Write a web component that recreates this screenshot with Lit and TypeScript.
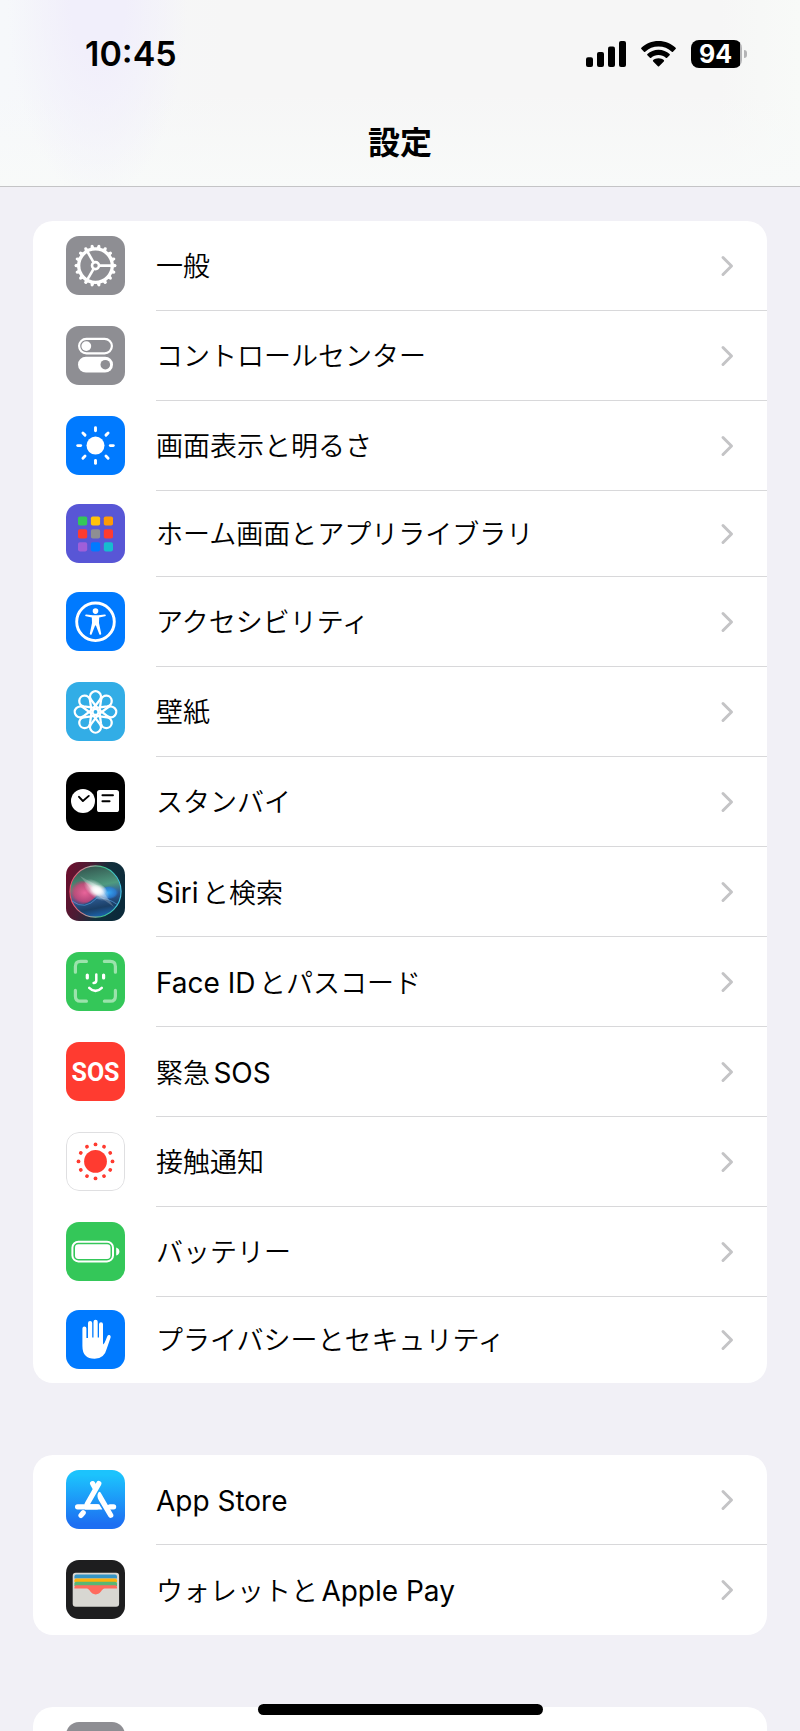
import { LitElement, html, svg, css } from "lit";
import { customElement, property } from "lit/decorators.js";

const range = (n: number) => Array.from({ length: n }, (_, i) => i);

const icons: Record<string, unknown> = {
  general: svg`
    <rect width="59" height="59" fill="#8e8e93"/>
    <g transform="translate(29.5 29.6)" fill="none" stroke="#fff">
      <circle r="16.8" stroke-width="3.3"/>
      <circle r="3.5" stroke-width="2.6"/>
      ${range(18).map((i) => svg`<path d="M17.5 -2 L20.4 -1.3 Q21.8 0 20.4 1.3 L17.5 2 Z" fill="#fff" stroke="none" transform="rotate(${i * 20})"/>`)}
      ${range(3).map((i) => svg`<path d="M4.4 0 H16" stroke-width="2.6" transform="rotate(${i * 120})"/>`)}
    </g>`,
  control: svg`
    <rect width="59" height="59" fill="#8e8e93"/>
    <rect x="13.1" y="12.8" width="32.8" height="14.6" rx="7.3" fill="none" stroke="#fff" stroke-width="2.2"/>
    <circle cx="20.3" cy="20.1" r="4.9" fill="#fff"/>
    <rect x="12" y="30.8" width="35" height="15.8" rx="7.9" fill="#fff"/>
    <circle cx="39.3" cy="38.7" r="4.8" fill="#8e8e93"/>`,
  display: svg`
    <rect width="59" height="59" fill="#007aff"/>
    <g transform="translate(29.5 29.6)">
      <circle r="9" fill="#fff"/>
      ${range(8).map((i) => svg`<path d="M0 -14.8 V-17.8" stroke="#fff" stroke-width="2.9" stroke-linecap="round" transform="rotate(${i * 45})"/>`)}
    </g>`,
  home: svg`
    <rect width="59" height="59" fill="#5856d6"/>
    ${["#34c759", "#ffc20a", "#ff9a06", "#ff3b30", "#8e8e93", "#ff3b30", "#9f5fd9", "#007aff", "#17bccf"].map(
      (c, i) => svg`<rect x="${12 + (i % 3) * 12.9}" y="${12.4 + Math.floor(i / 3) * 12.9}" width="9.2" height="9.2" rx="1.8" fill="${c}"/>`
    )}`,
  access: svg`
    <rect width="59" height="59" fill="#007aff"/>
    <circle cx="29.5" cy="29.8" r="18.8" fill="none" stroke="#fff" stroke-width="2.9"/>
    <circle cx="29.5" cy="19.1" r="2.8" fill="#fff"/>
    <path d="M20.2 22.4 L27 23.3 H32 L38.8 22.4 A0.9 0.9 0 0 1 39 24.2 L33.2 25.6 L33 31 L35.2 41.6 A1 1 0 0 1 33.3 42.2 L29.9 33.4 H29.1 L25.7 42.2 A1 1 0 0 1 23.8 41.6 L26 31 L25.8 25.6 L20 24.2 A0.9 0.9 0 0 1 20.2 22.4 Z" fill="#fff"/>`,
  wallpaper: svg`
    <rect width="59" height="59" fill="#32ade6"/>
    <g transform="translate(29.5 29.9)" fill="none" stroke="#fff" stroke-width="2.3">
      ${range(8).map((i) => svg`<path d="M2.4 -3.2 L-4.4 -12.2 A5.4 5.4 0 1 1 4.4 -12.2 L-2.4 -3.2" stroke-linejoin="round" transform="rotate(${i * 45})"/>`)}
      <circle r="3" fill="#32ade6"/>
    </g>`,
  standby: svg`
    <rect width="59" height="59" fill="#000"/>
    <circle cx="17" cy="28.9" r="12" fill="#fff"/>
    <path d="M13 24.8 L16.9 29 L22.8 23.9" fill="none" stroke="#000" stroke-width="1.9" stroke-linecap="round" stroke-linejoin="round"/>
    <rect x="31" y="18" width="22" height="22" rx="2.6" fill="#fff"/>
    <path d="M36.4 23.3 H47 M36.4 29.2 H43.6" stroke="#000" stroke-width="1.9" stroke-linecap="round"/>`,
  siri: svg`
    <defs>
      <linearGradient id="siri-bg" x1="0" y1="0.2" x2="1" y2="0.5">
        <stop offset="0" stop-color="#6b0f2d"/><stop offset="0.35" stop-color="#4a1c34"/><stop offset="0.65" stop-color="#12303c"/><stop offset="1" stop-color="#0b2a3a"/>
      </linearGradient>
      <linearGradient id="siri-ring" x1="0" y1="0.5" x2="1" y2="0.5">
        <stop offset="0" stop-color="#f2486a"/><stop offset="0.4" stop-color="#a9a9a4"/><stop offset="0.65" stop-color="#3cc48a"/><stop offset="1" stop-color="#46c6ea"/>
      </linearGradient>
      <linearGradient id="siri-orb" x1="0.4" y1="0" x2="0.6" y2="1">
        <stop offset="0" stop-color="#33564f"/><stop offset="0.4" stop-color="#4f9a80"/><stop offset="0.6" stop-color="#2f5c94"/><stop offset="0.82" stop-color="#1a3f66"/><stop offset="1" stop-color="#1a66b4"/>
      </linearGradient>
      <radialGradient id="siri-pink"><stop offset="0" stop-color="#e8649a"/><stop offset="0.75" stop-color="#cc4478" stop-opacity="0.85"/><stop offset="1" stop-color="#c03468" stop-opacity="0.3"/></radialGradient>
      <radialGradient id="siri-blue"><stop offset="0" stop-color="#35a9f5"/><stop offset="0.75" stop-color="#2a80d8" stop-opacity="0.8"/><stop offset="1" stop-color="#2a70c8" stop-opacity="0.1"/></radialGradient>
      <radialGradient id="siri-glow"><stop offset="0" stop-color="#fff"/><stop offset="0.3" stop-color="#fff" stop-opacity="0.8"/><stop offset="1" stop-color="#fff" stop-opacity="0"/></radialGradient>
    </defs>
    <rect width="59" height="59" fill="url(#siri-bg)"/>
    <circle cx="29.5" cy="29.5" r="25.6" fill="url(#siri-orb)" stroke="url(#siri-ring)" stroke-width="1.1"/>
    <path d="M4.5 30 C6 20 14 17 20 20 C26 23 30 28 33 30 C27 40 18 44 9 42 Q4.5 36 4.5 30 Z" fill="url(#siri-pink)"/>
    <path d="M32 30 C38 23 48 22 52 27 C54 34 46 40 38 36 Z" fill="url(#siri-blue)"/>
    <path d="M6 39 Q19 49 31 36 Q41 35 52 43" fill="none" stroke="#59a7e8" stroke-opacity="0.6" stroke-width="1"/>
    <path d="M14 14 L34 25 L48 45 L28 31 Z" fill="#fff" opacity="0.22"/>
    <ellipse cx="30.5" cy="28" rx="15" ry="8" fill="url(#siri-glow)" transform="rotate(38 30.5 28)"/>
    <ellipse cx="32" cy="28.5" rx="9" ry="6" fill="url(#siri-glow)"/>`,
  face: svg`
    <rect width="59" height="59" fill="#34c759"/>
    <g fill="none" stroke-linecap="round">
      <path d="M9.4 20.2 V14.4 Q9.4 9.4 14.4 9.4 H20.4 M38.4 9.4 H44.4 Q49.4 9.4 49.4 14.4 V20.2 M49.4 38.4 V44.2 Q49.4 49.2 44.4 49.2 H38.4 M20.4 49.2 H14.4 Q9.4 49.2 9.4 44.2 V38.4" stroke="#9be3ac" stroke-width="3.2"/>
      <path d="M21.3 23 V26 M37.6 23 V26" stroke="#fff" stroke-width="3.2"/>
      <path d="M30.3 22.6 V28.6 Q30.3 31 27.6 31" stroke="#fff" stroke-width="2.5"/>
      <path d="M23.2 35.8 Q29.5 42 35.8 35.8" stroke="#fff" stroke-width="2.5"/>
    </g>`,
  sos: svg`
    <rect width="59" height="59" fill="#ff3b30"/>
    <text class="sos" x="29.5" y="39" text-anchor="middle" fill="#fff">SOS</text>`,
  exposure: svg`
    <rect width="59" height="59" fill="#fff"/>
    <rect x="0.5" y="0.5" width="58" height="58" rx="12.5" fill="none" stroke="#dfdfe1"/>
    <g transform="translate(29.5 29.4)" fill="#ff3b30">
      <circle r="11.4"/>
      ${range(12).map((i) => svg`<circle cy="-17" r="1.9" transform="rotate(${i * 30})"/>`)}
    </g>`,
  battery: svg`
    <rect width="59" height="59" fill="#34c759"/>
    <rect x="6.4" y="19.8" width="40.6" height="19.6" rx="6" fill="none" stroke="#fff" stroke-width="2"/>
    <rect x="9" y="22.3" width="35.5" height="14.6" rx="3.4" fill="#fff"/>
    <path d="M50.2 25.6 Q53.4 26.6 53.4 29.6 Q53.4 32.6 50.2 33.6 Z" fill="#fff"/>`,
  privacy: svg`
    <rect width="59" height="59" fill="#007aff"/>
    <path d="M16.4 18.6 a2 2 0 0 1 4 0 V28 h1.6 V13 a2.1 2.1 0 0 1 4.2 0 V27.4 h1.3 V11.8 a2.1 2.1 0 0 1 4.2 0 V27.4 h1.3 V14.2 a2 2 0 0 1 4 0 V34.6 q1.6 -1 2.6 -4 l1.6 -4.2 q0.8 -1.8 2.4 -1.3 q1.5 0.6 1 2.4 L41 38 Q38.4 48.8 28.6 48.8 Q16.4 48.8 16.4 36 Z" fill="#fff"/>`,
  appstore: svg`
    <defs><linearGradient id="as-bg" x1="0" y1="0" x2="0" y2="1"><stop offset="0.08" stop-color="#1cc3fd"/><stop offset="0.92" stop-color="#1d6ff2"/></linearGradient></defs>
    <rect width="59" height="59" fill="url(#as-bg)"/>
    <g fill="none" stroke="#fff" stroke-width="5.2" stroke-linecap="round">
      <path d="M32.8 13.6 L21.2 34"/>
      <path d="M26.6 13.6 L28.6 17.2"/>
      <path d="M11.6 36.8 H31" />
      <path d="M44 36.8 H47.6"/>
      <path d="M17.2 42.8 L15 45.4"/>
    </g>
    <path d="M19 34.2 H33.2 L36.4 39.4 H19 Z" fill="#fff"/>
    <path d="M32.6 22.2 C30.9 24.6 31.2 27.4 32.8 30.2 L42.4 46.6 A2.6 2.6 0 0 0 47 44 L34.6 22.4 Q33.4 21.2 32.6 22.2 Z" fill="#fff"/>`,
  wallet: svg`
    <rect width="59" height="59" fill="#1e1e1f"/>
    <rect x="6.7" y="12.8" width="46.4" height="34" rx="3" fill="#d8d7d2"/>
    <path d="M8.4 18.6 V16.6 Q8.4 14.6 10.4 14.6 H49 Q51 14.6 51 16.6 V18.6 Z" fill="#3695c5"/>
    <path d="M8.4 22.3 V20.3 Q8.4 18.5 10.2 18.5 H49.2 Q51 18.5 51 20.3 V22.3 Z" fill="#ffb10a"/>
    <path d="M8.4 26 V23.6 Q8.4 21.8 10.2 21.8 H49.2 Q51 21.8 51 23.6 V26 Z" fill="#59b774"/>
    <path d="M8.4 28.6 V27 Q8.4 25.2 10.2 25.2 H49.2 Q51 25.2 51 27 V28.6 H38.6 C35.6 28.6 35 34.4 29.7 34.4 C24.4 34.4 23.8 28.6 20.8 28.6 Z" fill="#ff6b5d"/>`,
  plain: svg`<rect width="59" height="59" fill="#8e8e93"/>`,
};

interface Item {
  icon: string;
  label: string;
  name?: string;
  compact?: boolean;
}

const groups: Item[][] = [
  [
    { icon: "general", label: "一般" },
    { icon: "control", label: "コントロールセンター" },
    { icon: "display", label: "画面表示と明るさ" },
    { icon: "home", label: "ホーム画面とアプリライブラリ", compact: true },
    { icon: "access", label: "アクセシビリティ" },
    { icon: "wallpaper", label: "壁紙" },
    { icon: "standby", label: "スタンバイ" },
    { icon: "siri", label: "Siriと検索" },
    { icon: "face", label: "Face IDとパスコード" },
    { icon: "sos", label: "緊急SOS" },
    { icon: "exposure", label: "接触通知" },
    { icon: "battery", label: "バッテリー" },
    { icon: "privacy", label: "プライバシーとセキュリティ", compact: true },
  ],
  [
    { icon: "appstore", label: "App Store" },
    { icon: "wallet", label: "ウォレットとApple Pay" },
  ],
  [{ icon: "plain", label: "", name: "パスワード" }],
];

// Splits a label into runs of Latin and Japanese script.
const runs = (label: string) => label.match(/[ -~]+|[^ -~]+/g) ?? [];

@customElement("settings-row")
export class SettingsRow extends LitElement {
  @property({ attribute: false }) item!: Item;

  static styles = css`
    :host {
      display: block;
    }
    .row {
      display: flex;
      align-items: center;
      gap: 31px;
      height: 90px;
      padding-left: 33px;
      color: #000;
      text-decoration: none;
    }
    .row.compact {
      height: 86px;
    }
    .icon {
      flex: none;
      width: 59px;
      height: 59px;
      margin-bottom: 1px;
      border-radius: 13px;
    }
    .sos {
      font: 700 25px "Liberation Sans Narrow", "Roboto", sans-serif;
    }
    .body {
      flex: 1;
      min-width: 0;
      align-self: stretch;
      box-sizing: border-box;
      display: flex;
      align-items: center;
      justify-content: space-between;
      padding-right: 33px;
      border-bottom: 1px solid #d8d8da;
    }
    :host(:last-child) .body {
      border-bottom-color: transparent;
    }
    .label {
      padding-top: 3px;
      font-size: 27px;
      line-height: 40px;
      font-weight: 350;
      text-autospace: normal;
    }
    .latin {
      font-size: 28px;
      font-weight: 400;
    }
    .chevron {
      flex: none;
      width: 14px;
      height: 22px;
    }
  `;

  render() {
    const { icon, label, name, compact } = this.item;
    return html`
      <a class="row ${compact ? "compact" : ""}" href="#${icon}" aria-label=${name ?? label}>
        <svg class="icon" viewBox="0 0 59 59" aria-hidden="true">${icons[icon]}</svg>
        <span class="body">
          <span class="label">${runs(label).map((run) => (/^[ -~]/.test(run) ? html`<span class="latin">${run}</span>` : run))}</span>
          <svg class="chevron" viewBox="0 0 14 22" aria-hidden="true">
            <path d="M3 2.5 L11.5 11 L3 19.5" fill="none" stroke="#c4c4c6" stroke-width="3" stroke-linecap="round" stroke-linejoin="round" />
          </svg>
        </span>
      </a>
    `;
  }
}

@customElement("status-bar")
export class StatusBar extends LitElement {
  static styles = css`
    :host {
      display: flex;
      align-items: center;
      justify-content: space-between;
      height: 107px;
      padding: 0 53px 0 85px;
    }
    .time {
      font-size: 34px;
      font-weight: 600;
      line-height: 40px;
    }
    .indicators {
      display: flex;
      align-items: center;
      gap: 15px;
    }
    .signal {
      width: 40px;
      height: 26px;
    }
    .wifi {
      width: 35px;
      height: 26px;
    }
    .battery {
      display: flex;
      align-items: center;
      gap: 2px;
    }
    .level {
      width: 51px;
      height: 28px;
      box-sizing: border-box;
      padding-right: 2px;
      border-radius: 8px;
      background: linear-gradient(to right, #000 49px, #b4b4b6 49px);
      color: #fff;
      font-size: 25px;
      font-weight: 700;
      line-height: 28px;
      text-align: center;
    }
    .tip {
      width: 3px;
      height: 8px;
      border-radius: 0 4px 4px 0;
      background: #b4b4b6;
    }
  `;

  render() {
    return html`
      <span class="time">10:45</span>
      <div class="indicators">
        <svg class="signal" viewBox="0 0 40 26" aria-hidden="true">
          <rect x="0" y="16.3" width="7" height="9.7" rx="2" />
          <rect x="11" y="11" width="7" height="15" rx="2" />
          <rect x="22" y="5.6" width="7" height="20.4" rx="2" />
          <rect x="33" y="0" width="7" height="26" rx="2" />
        </svg>
        <svg class="wifi" viewBox="0 0 35 26" aria-hidden="true">
          <path d="M17.5 0 C10.8 0 4.8 2.6 0.4 6.8 Q-0.2 7.5 0.4 8.1 L3 10.7 Q3.6 11.2 4.2 10.7 C7.8 7.4 12.4 5.5 17.5 5.5 C22.6 5.5 27.2 7.4 30.8 10.7 Q31.4 11.2 32 10.7 L34.6 8.1 Q35.2 7.5 34.6 6.8 C30.2 2.6 24.2 0 17.5 0 Z" />
          <path d="M17.5 8.7 C13.2 8.7 9.3 10.3 6.4 13 Q5.7 13.7 6.4 14.3 L8.9 16.8 Q9.5 17.4 10.2 16.8 C12.2 15.1 14.7 14.1 17.5 14.1 C20.3 14.1 22.8 15.1 24.8 16.8 Q25.5 17.4 26.1 16.8 L28.6 14.3 Q29.3 13.7 28.6 13 C25.7 10.3 21.8 8.7 17.5 8.7 Z" />
          <path d="M17.5 17.2 C15.4 17.2 13.6 17.9 12.2 19 Q11.5 19.7 12.2 20.4 L16.9 25.3 Q17.5 25.9 18.1 25.3 L22.8 20.4 Q23.5 19.7 22.8 19 C21.4 17.9 19.6 17.2 17.5 17.2 Z" />
        </svg>
        <div class="battery">
          <span class="level">94</span>
          <span class="tip"></span>
        </div>
      </div>
    `;
  }
}

@customElement("app-root")
export class AppRoot extends LitElement {
  static styles = css`
    :host {
      display: flex;
      flex-direction: column;
      position: relative;
      height: 100vh;
      overflow: hidden;
      background: #f1f0f6;
      color: #000;
      font-family: "Inter", "Noto Sans CJK JP", sans-serif;
    }
    .header {
      flex: none;
      padding-bottom: 8px;
      border-bottom: 1px solid #c4c4c6;
      background:
        radial-gradient(ellipse 90px 200px at 98px 0, #f1effb 30%, transparent),
        linear-gradient(to bottom, transparent 50%, #f8faf9),
        linear-gradient(to right, #f6f8fb, #f6f6f6 28%, #f6f6f6 90%, #f8faf8);
    }
    .title {
      margin: 0;
      font-size: 32px;
      line-height: 71px;
      font-weight: 600;
      text-align: center;
    }
    .content {
      flex: 1;
      min-height: 0;
      overflow: hidden;
      display: flex;
      flex-direction: column;
      gap: 72px;
      padding: 34px 33px 0;
    }
    .group {
      flex: none;
      overflow: hidden;
      border-radius: 20px;
      background: #fff;
    }
    .home-bar {
      position: absolute;
      bottom: 16px;
      left: 0;
      right: 0;
      width: 285px;
      height: 11px;
      margin: 0 auto;
      border-radius: 6px;
      background: #000;
    }
  `;

  render() {
    return html`
      <header class="header">
        <status-bar></status-bar>
        <h1 class="title" lang="ja">設定</h1>
      </header>
      <main class="content" lang="ja">
        ${groups.map(
          (group) => html`
            <nav class="group">
              ${group.map((item) => html`<settings-row .item=${item}></settings-row>`)}
            </nav>
          `
        )}
      </main>
      <div class="home-bar"></div>
    `;
  }
}
